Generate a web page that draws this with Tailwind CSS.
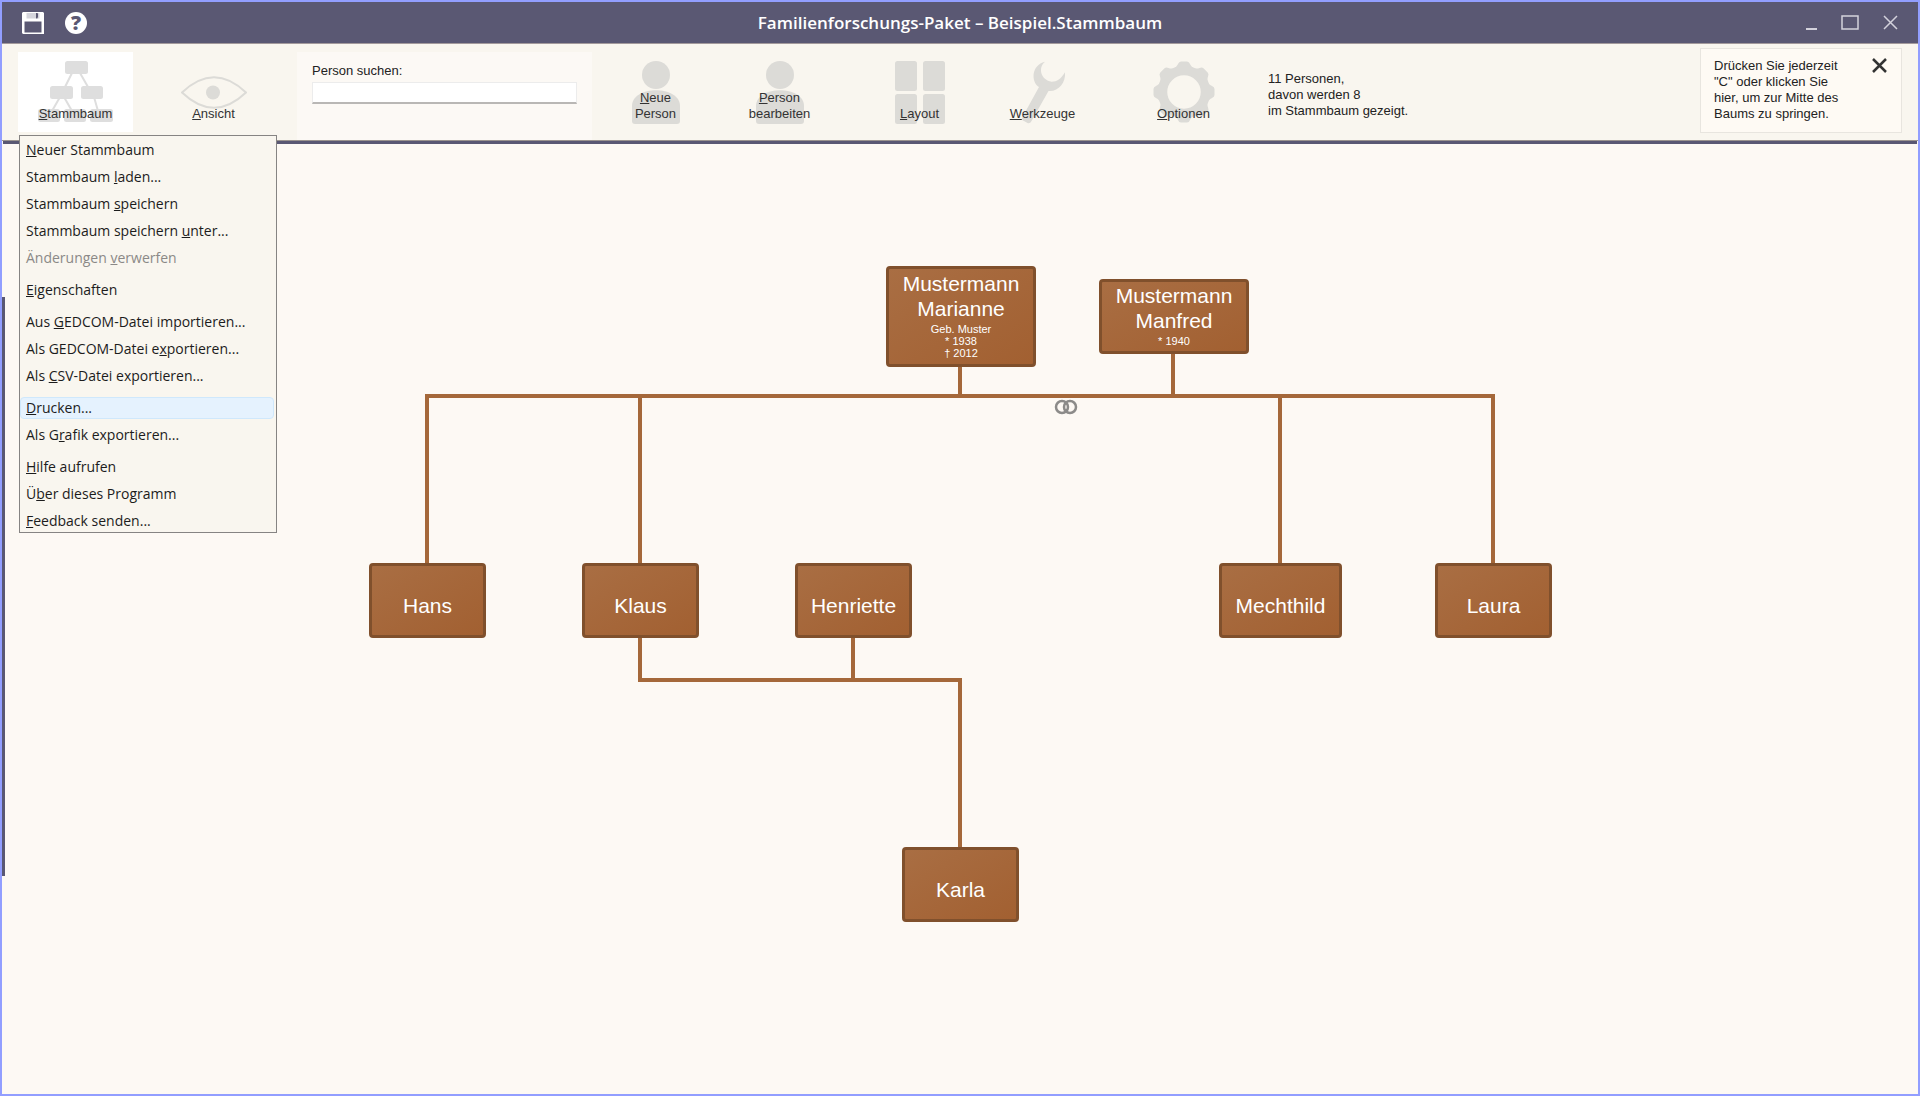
<!DOCTYPE html>
<html lang="de">
<head>
<meta charset="utf-8">
<title>Familienforschungs-Paket – Beispiel.Stammbaum</title>
<script src="https://cdn.jsdelivr.net/npm/@tailwindcss/browser@4"></script>
</head>
<body class="flex min-h-screen flex-col border-2 border-[#929eff] bg-[#fdf9f4] font-['Liberation_Sans',Arial,sans-serif] text-[13px] leading-4 text-[#222]">

<!-- Title bar -->
<header class="grid h-[42px] grid-cols-[1fr_auto_1fr] items-center border-b border-[#a39a9c] bg-[#5a5873] text-white">
  <div class="flex items-center gap-[21px] pl-5">
    <button type="button" aria-label="Speichern">
      <svg class="block size-[22px]" viewBox="0 0 22 22"><path fill="#fff" fill-rule="evenodd" d="M1 0H21L22 1V22H1L0 21V1ZM4.500 1V6.500H17.500V1ZM2.500 9.500V20.500H19.500V9.500Z"/><path fill="#fff" d="M4 0H14V7H4ZM15.500 0H18V7H15.500Z" opacity=".75"/><path fill="#5a5873" d="M14 1.500H16V5.500H14Z"/></svg>
    </button>
    <button type="button" aria-label="Hilfe" class="grid size-[22px] place-items-center rounded-full bg-white font-['Open_Sans',sans-serif] text-[20px] leading-5 font-extrabold text-[#5a5873]">?</button>
  </div>
  <h1 class="font-['Open_Sans','Noto_Sans',sans-serif] text-[17px] leading-6 font-semibold">Familienforschungs-Paket – Beispiel.Stammbaum</h1>
  <div class="flex items-center justify-end gap-[24px] pr-5">
    <button type="button" aria-label="Minimieren"><svg class="block h-4 w-[11px]" viewBox="0 0 11 16"><path d="M0 14H11" stroke="#d3d2dc" stroke-width="2"/></svg></button>
    <button type="button" aria-label="Maximieren"><svg class="block h-[15px] w-[18px]" viewBox="0 0 18 15"><path d="M1 1H17V14H1Z" fill="none" stroke="#d3d2dc" stroke-width="1.500"/></svg></button>
    <button type="button" aria-label="Schließen"><svg class="block size-[15px]" viewBox="0 0 15 15"><path d="M1 1L14 14M14 1L1 14" stroke="#d3d2dc" stroke-width="1.500"/></svg></button>
  </div>
</header>

<!-- Toolbar -->
<div class="flex h-[97px] items-start border-b border-[#9b948f] bg-[#f9f6ef] pr-4 pl-4">
  <div class="relative mt-2 mr-[23px]">
    <button type="button" aria-expanded="true" class="grid h-20 w-[115px] justify-items-center bg-white">
      <svg class="col-start-1 row-start-1 mt-[9px] h-[61px] w-[75px]" viewBox="0 0 75 61" fill="#dedede"><path d="M34 12L27 26M42 12L50 26M22 36L14 50M26 36L34 50M56 36L60 50" stroke="#dedede" stroke-width="2"/><rect x="27" width="23" height="13" rx="2.500"/><rect x="12" y="25" width="23" height="13" rx="2.500"/><rect x="43" y="25" width="22" height="13" rx="2.500"/><rect y="48" width="22" height="13" rx="2.500"/><rect x="26" y="48" width="22" height="13" rx="2.500"/><rect x="52" y="48" width="23" height="13" rx="2.500"/></svg>
      <span class="col-start-1 row-start-1 self-end pb-[10px] text-[#333]"><u>S</u>tammbaum</span>
    </button>

    <!-- Drop-down menu -->
    <div role="menu" class="absolute top-[83px] left-px z-10 flex w-[258px] flex-col gap-[5px] border border-[#868483] bg-[#f9f6ef] pt-[3px] pr-[2px] font-['Open_Sans','Noto_Sans',sans-serif] text-[14px] text-[#1c1c1c] *:h-[22px] *:rounded-sm *:px-[5px] *:text-left *:leading-[20px] *:border *:border-transparent">
      <button type="button" role="menuitem"><u>N</u>euer Stammbaum</button>
      <button type="button" role="menuitem">Stammbaum <u>l</u>aden...</button>
      <button type="button" role="menuitem">Stammbaum <u>s</u>peichern</button>
      <button type="button" role="menuitem">Stammbaum speichern <u>u</u>nter...</button>
      <button type="button" role="menuitem" disabled class="text-[#8b8987]">Änderungen <u>v</u>erwerfen</button>
      <button type="button" role="menuitem" class="mt-[5px]"><u>E</u>igenschaften</button>
      <button type="button" role="menuitem" class="mt-[5px]">Aus <u>G</u>EDCOM-Datei importieren...</button>
      <button type="button" role="menuitem">Als GEDCOM-Datei e<u>x</u>portieren...</button>
      <button type="button" role="menuitem">Als <u>C</u>SV-Datei exportieren...</button>
      <button type="button" role="menuitem" class="mt-[5px] border-[#cfe8fc]! bg-[#e5f2fe]"><u>D</u>rucken...</button>
      <button type="button" role="menuitem">Als G<u>r</u>afik exportieren...</button>
      <button type="button" role="menuitem" class="mt-[5px]"><u>H</u>ilfe aufrufen</button>
      <button type="button" role="menuitem">Ü<u>b</u>er dieses Programm</button>
      <button type="button" role="menuitem"><u>F</u>eedback senden...</button>
    </div>
  </div>

  <button type="button" class="mt-2 mr-[26px] grid h-20 w-[115px] justify-items-center">
    <svg class="col-start-1 row-start-1 mt-6 h-[33px] w-[66px]" viewBox="0 0 66 33"><path d="M1 16.500Q33 -14 65 16.500Q33 47 1 16.500Z" fill="none" stroke="#dcdbd7" stroke-width="2"/><circle cx="32" cy="16.500" r="7" fill="#dcdbd7"/></svg>
    <span class="col-start-1 row-start-1 self-end pb-[10px] text-[#333]"><u>A</u>nsicht</span>
  </button>

  <div class="mt-2 mr-[6px] flex h-[88px] w-[295px] flex-col bg-[#fcf9f5] pt-[11px] pr-[15px] pl-[15px]">
    <label for="suche">Person suchen:</label>
    <input id="suche" type="text" class="mt-[3px] h-[22px] w-full border border-b-2 border-[#ececec] border-b-[#b9b7b5] bg-white px-1">
  </div>

  <button type="button" class="mt-2 mr-[9px] grid h-20 w-[115px] justify-items-center">
    <svg class="col-start-1 row-start-1 mt-[9px] h-[63px] w-12" viewBox="0 0 48 63" fill="#dcdbd7"><circle cx="24" cy="14" r="14"/><path d="M0 45C0 24 48 24 48 45V60Q48 63 45 63H3Q0 63 0 60Z"/></svg>
    <span class="col-start-1 row-start-1 self-end pb-[10px] text-[#333]"><u>N</u>eue<br>Person</span>
  </button>
  <button type="button" class="mt-2 mr-[25px] grid h-20 w-[115px] justify-items-center">
    <svg class="col-start-1 row-start-1 mt-[9px] h-[63px] w-12" viewBox="0 0 48 63" fill="#dcdbd7"><circle cx="24" cy="14" r="14"/><path d="M0 45C0 24 48 24 48 45V60Q48 63 45 63H3Q0 63 0 60Z"/></svg>
    <span class="col-start-1 row-start-1 self-end pb-[10px] text-[#333]"><u>P</u>erson<br>bearbeiten</span>
  </button>
  <button type="button" class="mt-2 mr-[8px] grid h-20 w-[115px] justify-items-center">
    <svg class="col-start-1 row-start-1 mt-[9px] h-[63px] w-[50px]" viewBox="0 0 50 63" fill="#dcdbd7"><rect width="22" height="30" rx="2.500"/><rect x="28" width="22" height="30" rx="2.500"/><rect y="33" width="22" height="30" rx="2.500"/><rect x="28" y="33" width="22" height="30" rx="2.500"/></svg>
    <span class="col-start-1 row-start-1 self-end pb-[10px] text-[#333]"><u>L</u>ayout</span>
  </button>
  <button type="button" class="mt-2 mr-[26px] grid h-20 w-[115px] justify-items-center">
    <svg class="col-start-1 row-start-1 mt-[9px] h-16 w-[50px]" viewBox="0 1 50 64" fill="#dcdbd7"><path d="M27 1.700C13 5 13 22 21 27L4.500 57Q3 60 6 61L9.500 63Q12 64 13.500 61L30.500 31C40 32 48 23 47 12.300C43 19 39 21.700 33.700 21.700C23 20 19.500 8 27 1.700Z"/></svg>
    <span class="col-start-1 row-start-1 self-end pb-[10px] text-[#333]"><u>W</u>erkzeuge</span>
  </button>
  <button type="button" class="mt-2 mr-[27px] grid h-20 w-[115px] justify-items-center">
    <svg class="col-start-1 row-start-1 mt-[9px] size-[62px]" viewBox="-31 -31 62 62" fill="#dcdbd7"><circle r="21.500" fill="none" stroke="#dcdbd7" stroke-width="9.500"/><g id="teeth"><path id="tooth" d="M-12 -22C-8 -25 -7 -26 -6 -28Q-5 -30.500 -3 -30.500H3Q5 -30.500 6 -28C7 -26 8 -25 12 -22Z"/><use href="#tooth" transform="rotate(45)"/><use href="#tooth" transform="rotate(90)"/><use href="#tooth" transform="rotate(135)"/></g><use href="#teeth" transform="rotate(180)"/></svg>
    <span class="col-start-1 row-start-1 self-end pb-[10px] text-[#333]"><u>O</u>ptionen</span>
  </button>

  <p class="mt-[27px]">11 Personen,<br>davon werden 8<br>im Stammbaum gezeigt.</p>

  <div class="mt-1 ml-auto flex h-[85px] w-[202px] items-start justify-between border border-[#e8e5df] bg-[#fefaf4] pt-[9px] pr-[14px] pl-[13px]">
    <p>Drücken Sie jederzeit<br>"C" oder klicken Sie<br>hier, um zur Mitte des<br>Baums zu springen.</p>
    <button type="button" aria-label="Hinweis schließen"><svg class="block size-[15px]" viewBox="0 0 15 15"><path d="M1 1L14 14M14 1L1 14" stroke="#333" stroke-width="2.500"/></svg></button>
  </div>
</div>

<!-- Canvas -->
<main class="mx-px grow border-t-[3px] border-[#5a5873]">
  <div class="-ml-px flex items-start">
    <div class="mt-[153px] h-[579px] w-[3px] bg-[#5a5873]"></div>
    <div class="relative mx-auto mt-[122px] h-[658px] w-[1184px] -translate-x-px text-[21px] leading-[25px] text-white *:absolute *:flex *:flex-col *:items-center *:justify-center *:text-center">
      <svg class="inset-0 h-[658px] w-[1184px]" viewBox="0 0 1184 658" fill="none" stroke="#a5683a" stroke-width="4"><path d="M59 300V130H1125V300M272 130V300M912 130V300M592 100V130M805 87V130M272 372V414H592V584M485 372V414"/><g stroke="#8c8b89" stroke-width="2.500"><circle cx="694" cy="141" r="6"/><circle cx="702" cy="141" r="6"/></g></svg>
      <div class="top-0 left-[518px] h-[101px] w-[150px] rounded border-[3px] border-[#80502c] bg-linear-to-br from-[#a96e43] to-[#a26031] pb-1">
        <p class="mb-[2px]">Mustermann<br>Marianne</p>
        <p class="text-[11px] leading-3">Geb. Muster<br>* 1938<br>† 2012</p>
      </div>
      <div class="top-[13px] left-[731px] h-[75px] w-[150px] rounded border-[3px] border-[#80502c] bg-linear-to-br from-[#a96e43] to-[#a26031] pb-1">
        <p class="mb-[2px]">Mustermann<br>Manfred</p>
        <p class="text-[11px] leading-3">* 1940</p>
      </div>
      <div class="top-[297px] left-px h-[75px] w-[117px] rounded border-[3px] border-[#80502c] bg-linear-to-br from-[#a96e43] to-[#a26031] pt-[10px]">Hans</div>
      <div class="top-[297px] left-[214px] h-[75px] w-[117px] rounded border-[3px] border-[#80502c] bg-linear-to-br from-[#a96e43] to-[#a26031] pt-[10px]">Klaus</div>
      <div class="top-[297px] left-[427px] h-[75px] w-[117px] rounded border-[3px] border-[#80502c] bg-linear-to-br from-[#a96e43] to-[#a26031] pt-[10px]">Henriette</div>
      <div class="top-[297px] left-[851px] h-[75px] w-[123px] rounded border-[3px] border-[#80502c] bg-linear-to-br from-[#a96e43] to-[#a26031] pt-[10px]">Mechthild</div>
      <div class="top-[297px] left-[1067px] h-[75px] w-[117px] rounded border-[3px] border-[#80502c] bg-linear-to-br from-[#a96e43] to-[#a26031] pt-[10px]">Laura</div>
      <div class="top-[581px] left-[534px] h-[75px] w-[117px] rounded border-[3px] border-[#80502c] bg-linear-to-br from-[#a96e43] to-[#a26031] pt-[10px]">Karla</div>
    </div>
  </div>
</main>
</body>
</html>
